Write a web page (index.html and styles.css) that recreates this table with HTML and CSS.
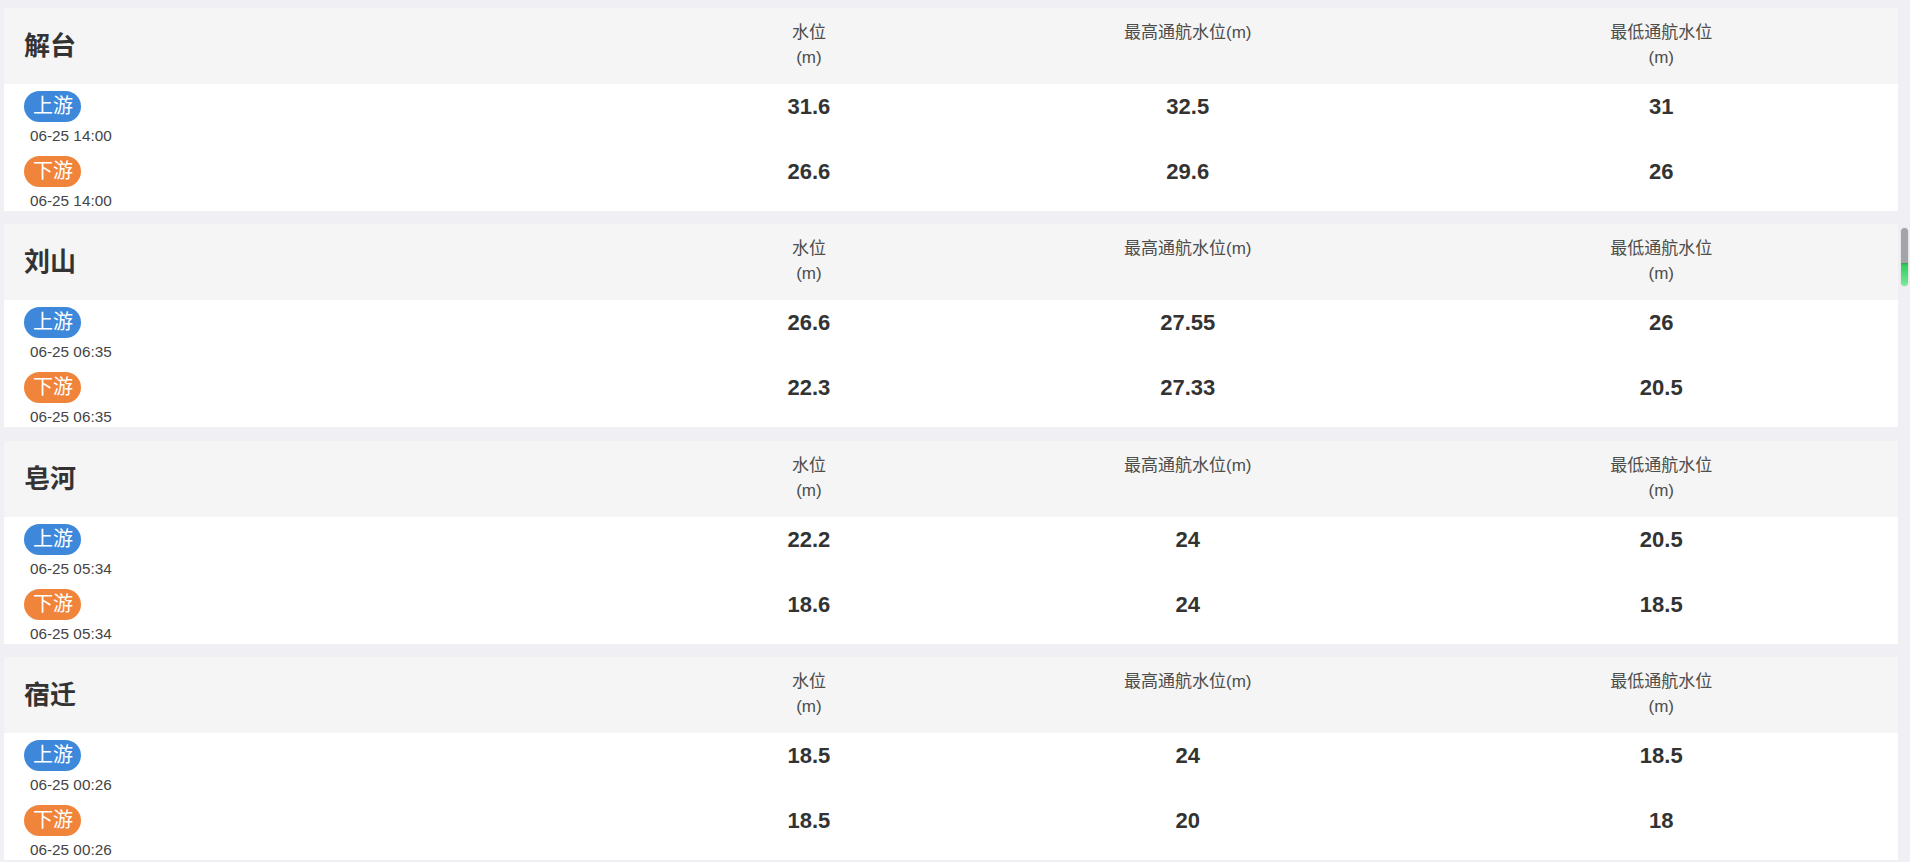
FILE: index.html
```html
<!DOCTYPE html>
<html lang="zh-CN">
<head>
<meta charset="utf-8">
<title>船闸水位</title>
<link rel="stylesheet" href="styles.css">
</head>
<body>
<div class="list">
  <section class="card">
    <div class="card-head">
      <div class="name">解台</div>
      <div class="label">水位<br>(m)</div>
      <div class="label">最高通航水位(m)</div>
      <div class="label">最低通航水位<br>(m)</div>
    </div>
    <div class="card-body">
      <div class="row">
        <div class="where"><span class="tag up">上游</span><div class="time">06-25 14:00</div></div>
        <div class="val">31.6</div><div class="val">32.5</div><div class="val">31</div>
      </div>
      <div class="row">
        <div class="where"><span class="tag down">下游</span><div class="time">06-25 14:00</div></div>
        <div class="val">26.6</div><div class="val">29.6</div><div class="val">26</div>
      </div>
    </div>
  </section>

  <section class="card">
    <div class="card-head">
      <div class="name">刘山</div>
      <div class="label">水位<br>(m)</div>
      <div class="label">最高通航水位(m)</div>
      <div class="label">最低通航水位<br>(m)</div>
    </div>
    <div class="card-body">
      <div class="row">
        <div class="where"><span class="tag up">上游</span><div class="time">06-25 06:35</div></div>
        <div class="val">26.6</div><div class="val">27.55</div><div class="val">26</div>
      </div>
      <div class="row">
        <div class="where"><span class="tag down">下游</span><div class="time">06-25 06:35</div></div>
        <div class="val">22.3</div><div class="val">27.33</div><div class="val">20.5</div>
      </div>
    </div>
  </section>

  <section class="card">
    <div class="card-head">
      <div class="name">皂河</div>
      <div class="label">水位<br>(m)</div>
      <div class="label">最高通航水位(m)</div>
      <div class="label">最低通航水位<br>(m)</div>
    </div>
    <div class="card-body">
      <div class="row">
        <div class="where"><span class="tag up">上游</span><div class="time">06-25 05:34</div></div>
        <div class="val">22.2</div><div class="val">24</div><div class="val">20.5</div>
      </div>
      <div class="row">
        <div class="where"><span class="tag down">下游</span><div class="time">06-25 05:34</div></div>
        <div class="val">18.6</div><div class="val">24</div><div class="val">18.5</div>
      </div>
    </div>
  </section>

  <section class="card">
    <div class="card-head">
      <div class="name">宿迁</div>
      <div class="label">水位<br>(m)</div>
      <div class="label">最高通航水位(m)</div>
      <div class="label">最低通航水位<br>(m)</div>
    </div>
    <div class="card-body">
      <div class="row">
        <div class="where"><span class="tag up">上游</span><div class="time">06-25 00:26</div></div>
        <div class="val">18.5</div><div class="val">24</div><div class="val">18.5</div>
      </div>
      <div class="row">
        <div class="where"><span class="tag down">下游</span><div class="time">06-25 00:26</div></div>
        <div class="val">18.5</div><div class="val">20</div><div class="val">18</div>
      </div>
    </div>
  </section>
</div>
<div class="scroll-thumb"></div>
</body>
</html>
```

FILE: styles.css
```css
html, body {
  margin: 0;
  height: 100%;
  overflow: hidden;
}
body {
  background: #efeff4;
  font-family: "Liberation Sans", "Noto Sans CJK SC", sans-serif;
  color: #333;
  padding: 7.5px 12px 0 4px;
  box-sizing: border-box;
}
.list {
  display: flex;
  flex-direction: column;
  gap: 13.5px;
}
.card {
  background: #fff;
  height: 203px;
  display: flex;
  flex-direction: column;
}
.card-head,
.row {
  display: grid;
  grid-template-columns: 35% 15% 25% 25%;
}
.card-head {
  background: #f5f5f5;
  height: 76px;
  box-sizing: border-box;
  padding-top: 12px;
  align-items: start;
}
.name {
  align-self: center;
  margin-top: -12px;
  padding-left: 20px;
  font-size: 26px;
  font-weight: bold;
  color: #333;
  line-height: 30px;
}
.label {
  text-align: center;
  font-size: 17px;
  line-height: 25px;
  color: #4d4d4d;
}
.card-body {
  padding-top: 7px;
  display: flex;
  flex-direction: column;
  gap: 10px;
}
.where {
  padding-left: 20px;
}
.tag {
  display: inline-block;
  height: 31px;
  line-height: 31px;
  padding: 0 8px 0 9px;
  border-radius: 16px;
  color: #fff;
  font-size: 20px;
}
.tag.up {
  background: #3d88db;
}
.tag.down {
  background: #f1843b;
}
.time {
  margin-top: 4px;
  padding-left: 6px;
  font-size: 15.3px;
  line-height: 20px;
  color: #444;
}
.val {
  text-align: center;
  font-size: 22px;
  font-weight: bold;
  line-height: 31px;
  color: #333;
}
.scroll-thumb {
  position: fixed;
  left: 1901px;
  top: 228px;
  width: 7px;
  height: 58px;
  border-radius: 4px;
  background: linear-gradient(to bottom, #a3a3aa 0, #a3a3aa 60%, #2f9c50 60%, #2fcf5e 64%, #7ee89b 100%);
  box-shadow: 0 0 2px rgba(0, 0, 0, 0.12);
}
```
